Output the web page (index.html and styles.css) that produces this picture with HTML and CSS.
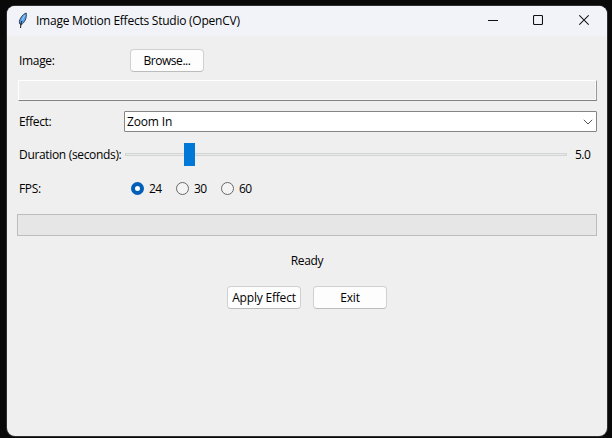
FILE: index.html
```html
<!DOCTYPE html>
<html lang="en">
<head>
<meta charset="utf-8">
<title>Image Motion Effects Studio (OpenCV)</title>
<link rel="stylesheet" href="styles.css">
</head>
<body>
<main class="window">
  <header class="titlebar">
    <svg class="feather" width="10" height="17" viewBox="0 0 10 17">
      <path d="M8.2 1C5 2 2 6 1.3 9.5L1.8 12l1.3.6C6.5 11 9 6 8.2 1z" fill="#5ba3ee" stroke="#253348" stroke-width=".9"/>
      <path d="M4 9C3 11 2.7 13 2.6 16" fill="none" stroke="#111" stroke-width="1"/>
      <path d="M7 3L4.2 8" stroke="#a9d3fb" stroke-width=".8"/>
    </svg>
    <h1 class="title">Image Motion Effects Studio (OpenCV)</h1>
    <div class="controls">
      <svg width="10" height="12" viewBox="0 0 10 12"><path d="M0 6.5h10" stroke="#111"/></svg>
      <svg width="10" height="12" viewBox="0 0 10 12"><rect x=".5" y="1.5" width="9" height="9" rx="1" fill="none" stroke="#111" stroke-width="1.1"/></svg>
      <svg width="10" height="12" viewBox="0 0 10 12"><path d="M.3 1.3l9.4 9.4M9.7 1.3L.3 10.7" stroke="#111" stroke-width="1.1"/></svg>
    </div>
  </header>
  <section class="form">
    <div class="row image-row"><span class="label">Image:</span><button class="button browse">Browse...</button></div>
    <div class="path"></div>
    <div class="row effect-row"><span class="label">Effect:</span>
      <div class="combo"><span>Zoom In</span><svg width="10" height="6" viewBox="0 0 10 6"><path d="M.8.8L5 5 9.2.8" fill="none" stroke="#555"/></svg></div>
    </div>
    <div class="row duration-row"><span class="label">Duration (seconds):</span>
      <div class="slider"><div class="track"></div><div class="thumb"></div></div>
      <span class="value">5.0</span>
    </div>
    <div class="row fps-row"><span class="label">FPS:</span>
      <div class="radios">
        <div class="option"><i class="radio checked"></i><span>24</span></div>
        <div class="option"><i class="radio"></i><span>30</span></div>
        <div class="option"><i class="radio"></i><span>60</span></div>
      </div>
    </div>
    <div class="progress"></div>
    <p class="status">Ready</p>
    <div class="actions"><button class="button apply">Apply Effect</button><button class="button">Exit</button></div>
  </section>
</main>
</body>
</html>
```
FILE: styles.css
```css
* { box-sizing: border-box; }
body { margin: 0; height: 438px; padding: 6px 5px 2px 7px; background: #090909; overflow: hidden; font: 12px/16px "Open Sans", "Noto Sans", sans-serif; color: #000; }
.window { height: 430px; background: #efefef; border-radius: 8px; overflow: hidden; box-shadow: 0 0 0 1px #303030; }
.titlebar { height: 30px; display: flex; align-items: center; padding: 0 18px 0 11px; background: #f1f3f9; }
.feather { margin-top: -1px; }
.title { margin: 0 0 0 8px; font-size: 12px; font-weight: 400; white-space: nowrap; letter-spacing: -.24px; }
.controls { display: flex; gap: 36px; margin-left: auto; margin-top: -2px; }
.controls svg:first-child { margin-right: -1px; position: relative; left: 1px; }
.controls svg:nth-child(2) { margin-left: 1px; }
.form { padding: 13px 10px 0; letter-spacing: -.33px; }
.row { display: flex; align-items: center; white-space: nowrap; }
.label { width: 107px; padding-left: 2px; flex: none; }
.image-row { height: 23px; }
.button { width: 74px; height: 23px; padding: 0; border: 1px solid #d0d0d0; border-bottom-color: #bcbcbc; border-radius: 4px; background: #fdfdfd; font: inherit; letter-spacing: -.2px; color: #000; white-space: nowrap; }
.browse { margin-left: 6px; letter-spacing: -.45px; }
.path { height: 21px; margin: 8px 0 10px 1px; border: 1px solid #fff; border-right-color: #999; border-bottom-color: #828282; box-shadow: inset -1px -1px #f8f8f8; }
.effect-row { height: 21px; }
.combo { flex: 1; height: 21px; display: flex; align-items: center; justify-content: space-between; border: 1px solid #858585; border-radius: 1px; background: #fff; padding: 0 3px 0 2px; letter-spacing: -.15px; }
.duration-row { height: 23px; margin-top: 11px; }
.slider { width: 444px; height: 23px; display: flex; align-items: center; position: relative; padding: 0 1px; }
.track { width: 442px; height: 3px; border: 1px solid #d1d6d4; background: #e8eaea; }
.thumb { position: absolute; left: 60px; top: 0; width: 11px; height: 23px; background: #0078d7; }
.value { margin-left: 7px; letter-spacing: -.5px; }
.fps-row { height: 19px; margin-top: 13px; }
.radios { display: flex; padding-left: 7px; }
.option { width: 45px; display: flex; align-items: center; gap: 5px; letter-spacing: -.7px; }
.radio { width: 13px; height: 13px; border: 1px solid #686868; border-radius: 50%; background: #f4f4f4; }
.radio.checked { border: 4px solid #005fb8; background: #fff; }
.progress { height: 22px; margin-top: 16px; border: 1px solid #bcbcbc; background: #e6e6e6; }
.status { margin: 17px 0; text-align: center; }
.actions { display: flex; justify-content: center; gap: 12px; }
```
